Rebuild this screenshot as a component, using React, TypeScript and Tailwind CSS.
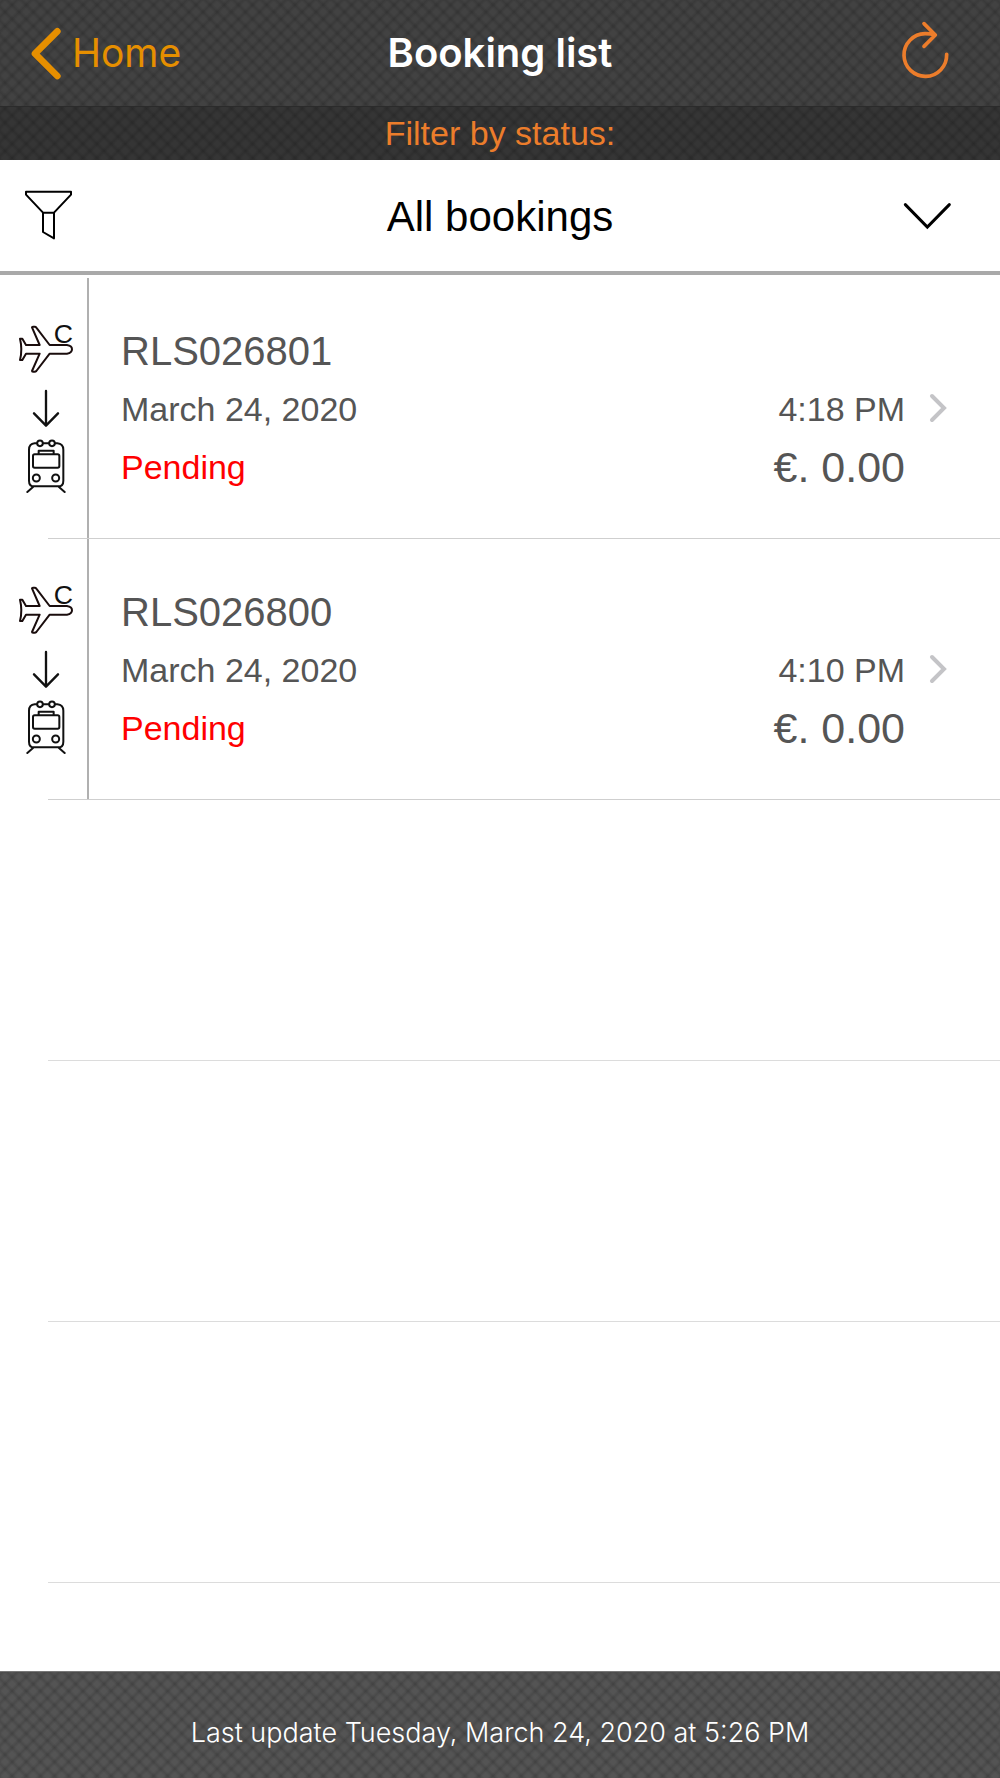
import React, {useState} from "react";
import clsx from "clsx";

const bookings = [
    {id: "RLS026801", date: "March 24, 2020", time: "4:18 PM", status: "Pending", price: "€. 0.00"},
    {id: "RLS026800", date: "March 24, 2020", time: "4:10 PM", status: "Pending", price: "€. 0.00"},
];

const emptyRows = [1, 2, 3];

// Diagonal crosshatch laid over the dark bars
const hatch =
    "bg-[repeating-linear-gradient(45deg,#0000001f_0px,#00000000_3px,#00000000_7px,#0000001f_10px),repeating-linear-gradient(-45deg,#0000001f_0px,#00000000_3px,#00000000_7px,#0000001f_10px)]";

function PlaneIcon() {
    return (
        <svg viewBox="54 159 168 159" className="w-14 h-[53px] overflow-visible" fill="none" stroke="#1a0d0d" strokeWidth="6" strokeLinejoin="round">
            <path d="M60 209 H67 L78 228 H119 L96 175 Q96 173 99 173 H104 Q107 173 109 176 L149 228 H201 Q216 230 216 241 Q216 252 201 254 H149 L109 306 Q107 308 104 308 H99 Q96 308 96 306 L119 254 H78 L67 273 H60 Q68 241 60 209 Z"/>
            <text x="161" y="221" fontSize="80" fill="#111111" stroke="none" fontFamily="Liberation Sans, Arial, sans-serif">C</text>
        </svg>
    );
}

function ArrowDownIcon() {
    return (
        <svg viewBox="96 351 84 120" className="w-7 h-10" fill="none" stroke="#111111" strokeWidth="7" strokeLinecap="round" strokeLinejoin="round">
            <path d="M138 363 V466 M102 430 L138 467 L174 430"/>
        </svg>
    );
}

function TrainIcon() {
    return (
        <svg viewBox="78 507 120 165" className="w-10 h-[55px]" fill="none" stroke="#111111" strokeWidth="6" strokeLinecap="round" strokeLinejoin="round">
            <circle cx="120" cy="520" r="8.5"/>
            <circle cx="156" cy="520" r="8.5"/>
            <path d="M129 520 H147 M111 520 H104 Q87 522 87 539 V632 Q87 649 102 649 H175 Q190 649 190 632 V539 Q190 522 172 520 H165"/>
            <rect x="99" y="553" width="79" height="40" rx="5"/>
            <path d="M116 552 V542 H161 V552 M99 651 L82 666 M177 651 L194 666"/>
            <circle cx="109" cy="624" r="10.5"/>
            <circle cx="167" cy="624" r="10.5"/>
        </svg>
    );
}

function Header() {
    return (
        <header className={clsx("grid grid-cols-[1fr_auto_1fr] items-center h-[106px] px-[30px] bg-[#424242] font-['Inter',sans-serif] text-[40px]", hatch)}>
            <button type="button" className="flex items-center gap-2 justify-self-start pt-px text-[39px] text-[#e68f00]">
                <svg viewBox="90 81 102 159" className="w-[34px] h-[53px]" fill="none" stroke="currentColor" strokeWidth="20" strokeLinecap="round" strokeLinejoin="round">
                    <path d="M172 94 L105 161 L172 228"/>
                </svg>
                Home
            </button>
            <h1 className="font-semibold text-white">Booking list</h1>
            <button type="button" aria-label="Refresh" className="justify-self-end pr-5 text-[#ec7d2b]">
                <svg viewBox="693 60 147 198" className="w-[49px] h-[66px]" fill="none" stroke="currentColor" strokeWidth="11" strokeLinecap="round" strokeLinejoin="round">
                    <path d="M830 163 A64 64 0 1 1 765 101 Q782 101 796 105 M762 71 L796 105 L762 139"/>
                </svg>
            </button>
        </header>
    );
}

function StatusFilter() {
    const [status, setStatus] = useState("all");

    return (
        <section>
            <label
                htmlFor="status"
                className={clsx("flex items-center justify-center h-[54px] border-t border-[#2b2b2b] bg-[#353535] text-[34px] text-[#ec7d2b]", hatch)}
            >
                Filter by status:
            </label>
            <div className="grid items-center border-b-4 border-[#a9a9a9]">
                <select
                    id="status"
                    value={status}
                    onChange={e => setStatus(e.target.value)}
                    className="col-start-1 row-start-1 w-full h-[111px] pt-0.5 appearance-none bg-white text-[42px] text-black [text-align-last:center]"
                >
                    <option value="all">All bookings</option>
                    <option value="pending">Pending</option>
                </select>
                <div className="col-start-1 row-start-1 flex items-center justify-between pl-6 pr-12 pointer-events-none">
                    <svg viewBox="72 567 147 159" className="w-[49px] h-[53px]" fill="none" stroke="#000000" strokeWidth="6" strokeLinejoin="round">
                        <path d="M78 575 H213 V584 L162 638 H129 L78 584 Z M129 638 V696 L162 715 V638"/>
                    </svg>
                    <svg viewBox="699 603 147 84" className="w-[49px] h-7" fill="none" stroke="#000000" strokeWidth="9" strokeLinecap="round">
                        <path d="M706 611 L772 678 L838 611"/>
                    </svg>
                </div>
            </div>
        </section>
    );
}

function BookingRow({booking}: {booking: typeof bookings[number]}) {
    return (
        <li className="relative">
            <a href={"#" + booking.id} className="flex h-[261px] pr-[51px] leading-[58px] text-[34px] text-[#555555]">
                <div className="flex flex-col items-center gap-3 w-[89px] pt-11 pl-[5px] border-r-2 border-[#b0b0b0]">
                    <PlaneIcon/>
                    <ArrowDownIcon/>
                    <TrainIcon/>
                </div>
                <div className="flex-1 pt-11 pl-8">
                    <h2 className="text-[40px] leading-[58px]">{booking.id}</h2>
                    <p>{booking.date}</p>
                    <p className="text-[#ff0000]">{booking.status}</p>
                </div>
                <div className="pt-[102px] text-right">
                    <p>{booking.time}</p>
                    <p className="text-[43px] leading-[58px]">{booking.price}</p>
                </div>
                <svg viewBox="0 0 20 32" className="self-center w-5 h-8 ml-6" fill="none" stroke="#c4c4c7" strokeWidth="4" strokeLinecap="round" strokeLinejoin="miter">
                    <path d="M3 3 L15 15 L3 27"/>
                </svg>
            </a>
            <div className="absolute left-12 right-0 bottom-0 h-px bg-[#cfcfcf]"/>
        </li>
    );
}

export default function App() {
    return (
        <div className="flex flex-col min-h-screen bg-white font-['Liberation_Sans',Arial,sans-serif]">
            <Header/>
            <StatusFilter/>
            <main className="flex-1 pt-[3px]">
                <ul>
                    {bookings.map(booking => <BookingRow key={booking.id} booking={booking}/>)}
                    {emptyRows.map(row => (
                        <li key={row} className="h-[261px] ml-12 border-b border-[#dcdcdc]"/>
                    ))}
                </ul>
            </main>
            <footer className={clsx("flex items-center justify-center h-[107px] pt-4 border-t border-[#777777] bg-[#545454] font-['Inter',sans-serif] font-light text-[27px] text-white", hatch)}>
                Last update Tuesday, March 24, 2020 at 5:26 PM
            </footer>
        </div>
    );
}
